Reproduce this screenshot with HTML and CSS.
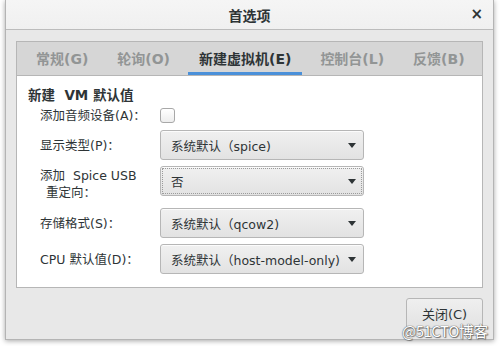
FILE: index.html
```html
<!DOCTYPE html>
<html lang="zh">
<head>
<meta charset="utf-8">
<link rel="stylesheet" href="styles.css">
</head>
<body>
<div class="window">
  <div class="titlebar">
    <span class="title">首选项</span>
    <span class="close">×</span>
  </div>
  <div class="body">
    <div class="notebook">
      <div class="tabs">
        <div class="tab">常规(G)</div>
        <div class="tab">轮询(O)</div>
        <div class="tab active">新建虚拟机(E)</div>
        <div class="tab">控制台(L)</div>
        <div class="tab">反馈(B)</div>
      </div>
      <div class="page">
        <div class="heading">新建&nbsp; VM 默认值</div>
        <div class="form">
          <div class="label">添加音频设备(A)：</div>
          <div class="field"><span class="check"></span></div>

          <div class="label">显示类型(P)：</div>
          <div class="combo"><span>系统默认（spice)</span><span class="arrow"></span></div>

          <div class="label multi">添加&nbsp; Spice USB<br><span class="indent">重定向：</span></div>
          <div class="combo focus top"><span>否</span><span class="arrow"></span></div>

          <div class="label">存储格式(S)：</div>
          <div class="combo"><span>系统默认（qcow2)</span><span class="arrow"></span></div>

          <div class="label">CPU 默认值(D)：</div>
          <div class="combo"><span>系统默认（host-model-only)</span><span class="arrow"></span></div>
        </div>
      </div>
    </div>
    <div class="actions">
      <div class="button">关闭(C)</div>
    </div>
  </div>
</div>
<div class="watermark">@51CTO博客</div>
</body>
</html>
```
FILE: styles.css
```css
* { box-sizing: border-box; }
html, body {
  margin: 0;
  padding: 0;
  background: #ffffff;
  width: 500px;
  height: 346px;
  overflow: hidden;
  font-family: "DejaVu Sans", "Noto Sans CJK SC", sans-serif;
  font-size: 12.5px;
  color: #2e3436;
}
.window {
  margin: 0 6px 0 5px;
  height: 340px;
  background: #e8e8e8;
  border: 1px solid #b4b4b4;
  border-top: none;
  box-shadow: 0 1px 5px rgba(0,0,0,0.35);
  display: flex;
  flex-direction: column;
}
.titlebar {
  height: 30px;
  flex: none;
  background: linear-gradient(#f5f5f5, #f0f0f0);
  border-bottom: 1px solid #bcbcbc;
  display: flex;
  align-items: center;
  justify-content: center;
  position: relative;
}
.title {
  font-family: "Noto Sans CJK SC", sans-serif;
  font-weight: bold;
  font-size: 14px;
  color: #2e3436;
}
.close {
  position: absolute;
  right: 10px;
  top: 5px;
  font-family: "DejaVu Sans", sans-serif;
  font-weight: bold;
  font-size: 15px;
  color: #2e3436;
}
.body {
  flex: 1;
  padding: 11px 10px 0 10px;
  display: flex;
  flex-direction: column;
}
.notebook {
  height: 247px;
  border: 1px solid #b6b6b6;
  background: #ffffff;
  display: flex;
  flex-direction: column;
}
.tabs {
  height: 34px;
  flex: none;
  background: #d6d6d6;
  border-bottom: 1px solid #b6b6b6;
  display: flex;
  gap: 7px;
  padding-left: 8px;
}
.tab {
  padding: 2px 11px 0 11px;
  display: flex;
  align-items: center;
  font-weight: bold;
  font-size: 14px;
  color: #929595;
  border-bottom: 3px solid transparent;
}
.tab.active {
  color: #2e3436;
  border-bottom-color: #4a90d9;
}
.page {
  flex: 1;
  padding: 10px 0 0 11px;
}
.heading {
  font-weight: bold;
  font-size: 13.5px;
  line-height: 18px;
  margin-bottom: 2px;
}
.form {
  display: grid;
  grid-template-columns: 120px 204px;
  grid-template-rows: 18px 30px 36px 30px 30px;
  row-gap: 6px;
  padding-left: 12px;
  align-items: center;
}
.label {
  line-height: 17px;
  white-space: nowrap;
}
.label.multi {
  align-self: start;
  padding-top: 1px;
}
.indent { margin-left: 6px; }
.field { display: flex; align-items: center; }
.check {
  width: 15px;
  height: 15px;
  border: 1px solid #a8a8a8;
  border-radius: 3px;
  background: linear-gradient(#ffffff, #ededed);
}
.combo {
  height: 30px;
  border: 1px solid #b6b6b6;
  border-radius: 3px;
  background: linear-gradient(#f0f0f0, #e2e2e2);
  display: flex;
  align-items: center;
  justify-content: space-between;
  padding: 0 7px 0 10px;
  white-space: nowrap;
  box-shadow: 0 1px 0 rgba(255,255,255,0.8) inset;
}
.combo.top { align-self: start; }
.combo.focus {
  outline: 1px dotted #9a9a9a;
  outline-offset: -3px;
}
.arrow {
  width: 0;
  height: 0;
  border-left: 4px solid transparent;
  border-right: 4px solid transparent;
  border-top: 5px solid #2e3436;
  margin-left: 2px;
}
.actions {
  display: flex;
  justify-content: flex-end;
  padding-top: 10px;
}
.button {
  width: 77px;
  height: 31px;
  border: 1px solid #b6b6b6;
  border-radius: 3px;
  background: linear-gradient(#efefef, #e3e3e3);
  display: flex;
  align-items: center;
  justify-content: center;
  font-size: 13px;
}
.watermark {
  position: absolute;
  left: 402px;
  top: 320px;
  font-family: "Noto Sans CJK SC", sans-serif;
  font-size: 15px;
  color: #ffffff;
  text-shadow: 0 0 1px #555, 0 0 1px #555, 1px 1px 1px #777;
  letter-spacing: -0.5px;
}
```
